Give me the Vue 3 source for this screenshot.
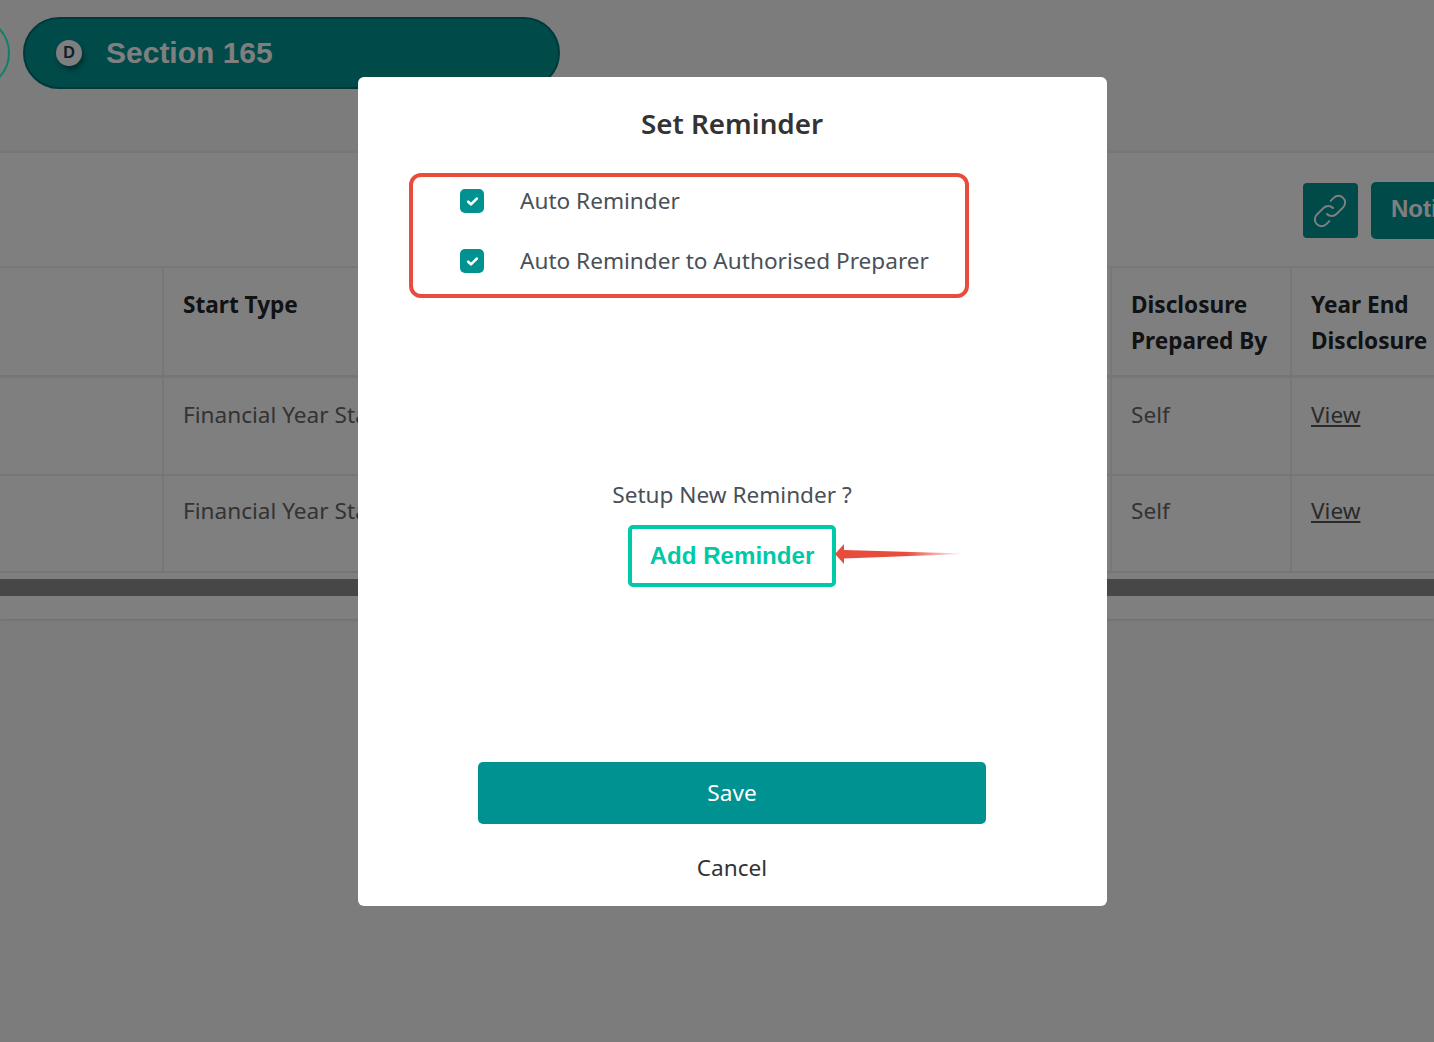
<template>
  <div class="page">
    <!-- page behind the dialog -->
    <div class="top">
      <div class="step-ring"></div>
      <div class="section-pill">
        <span class="badge">D</span>
        <span class="section-name">Section 165</span>
      </div>
    </div>

    <div class="card">
      <div class="toolbar">
        <button class="link-btn" aria-label="Copy link">
          <svg width="40" height="40" viewBox="0 0 24 24" fill="none" stroke="#fff" stroke-width="1.2" stroke-linecap="round" stroke-linejoin="round">
            <path d="M10.2 13.8a4 4 0 0 0 5.7 0l4-4a4 4 0 0 0-5.7-5.7l-1.8 1.8" />
            <path d="M13.8 10.2a4 4 0 0 0-5.7 0l-4 4a4 4 0 0 0 5.7 5.7l1.8-1.8" />
          </svg>
        </button>
        <button class="notify-btn">Notify</button>
      </div>

      <div class="table">
        <div class="cell head"></div>
        <div class="cell head">Start Type</div>
        <div class="cell head">Disclosure<br />Prepared By</div>
        <div class="cell head last">Year End<br />Disclosure</div>
        <template v-for="row in rows" :key="row.id">
          <div class="cell"></div>
          <div class="cell" :class="row.cls">{{ row.start }}</div>
          <div class="cell" :class="row.cls">{{ row.by }}</div>
          <div class="cell last" :class="row.cls"><a class="view">View</a></div>
        </template>
      </div>

      <div class="scroll-track"><div class="scroll-thumb"></div></div>
    </div>

    <div class="overlay"></div>

    <div class="modal">
      <h2 class="title">Set Reminder</h2>

      <div class="auto-box">
        <label class="check-row" v-for="opt in options" :key="opt">
          <span class="check">
            <svg width="13" height="11" viewBox="0 0 12 10" fill="none" stroke="#fff" stroke-width="2.4" stroke-linecap="round" stroke-linejoin="round">
              <path d="M2 5.2 4.6 7.6 10 2.4" />
            </svg>
          </span>
          <span class="check-text">{{ opt }}</span>
        </label>
      </div>

      <p class="setup">Setup New Reminder ?</p>
      <div class="add-wrap">
        <button class="add-btn">Add Reminder</button>
        <svg class="arrow" width="130" height="22" viewBox="0 0 130 22">
          <defs>
            <linearGradient id="tail" x1="0" x2="1" y1="0" y2="0">
              <stop offset="0.55" stop-color="#e74c3c" />
              <stop offset="1" stop-color="#e74c3c" stop-opacity="0" />
            </linearGradient>
          </defs>
          <path d="M0 11 9 1V7L129 10.4V11L9 15.5V21Z" fill="url(#tail)" />
        </svg>
      </div>

      <button class="save-btn">Save</button>
      <a class="cancel">Cancel</a>
    </div>
  </div>
</template>

<script setup>
const options = ['Auto Reminder', 'Auto Reminder to Authorised Preparer']

const rows = [
  { id: 1, start: 'Financial Year Start', by: 'Self', cls: '' },
  { id: 2, start: 'Financial Year Start', by: 'Self', cls: 'tight' }
]
</script>

<style>
html, body {
  margin: 0;
  overflow: hidden;
}
</style>

<style scoped>
.page {
  position: relative;
  width: 1434px;
  height: 1042px;
  overflow: hidden;
  background: #f8f8f8;
  font-family: "Noto Sans", "Open Sans", sans-serif;
  color: #333;
}

.overlay {
  position: absolute;
  inset: 0;
  background: rgba(0, 0, 0, 0.5);
}

.top {
  height: 151px;
  display: flex;
  align-items: flex-start;
  gap: 13px;
  padding-top: 17px;
  box-sizing: border-box;
}

.step-ring {
  flex: none;
  width: 72px;
  height: 72px;
  margin-left: -62px;
  border: 2px solid #1fffd0;
  border-radius: 50%;
  box-sizing: border-box;
}

.section-pill {
  flex: none;
  width: 537px;
  height: 72px;
  display: flex;
  align-items: center;
  gap: 24px;
  padding-left: 31px;
  box-sizing: border-box;
  background: #009494;
  border: 2px solid #007373;
  border-radius: 36px;
}

.badge {
  width: 26px;
  height: 26px;
  border-radius: 50%;
  background: #fff;
  color: #1f3d5c;
  font-family: "Liberation Sans", sans-serif;
  font-weight: 700;
  font-size: 16px;
  line-height: 26px;
  text-align: center;
  box-shadow: 2px 4px 5px rgba(0, 0, 0, 0.35);
}

.section-name {
  font-family: "Liberation Sans", sans-serif;
  font-weight: 700;
  font-size: 30px;
  color: #fff;
}

.card {
  height: 468px;
  box-sizing: border-box;
  display: flex;
  flex-direction: column;
  background: #fff;
  border-top: 2px solid #efefef;
  box-shadow: 0 1px 3px rgba(0, 0, 0, 0.12);
}

.toolbar {
  height: 113px;
  flex: none;
  display: flex;
  justify-content: flex-end;
  gap: 13px;
  padding: 29px 0 0;
  box-sizing: border-box;
}

.link-btn {
  width: 55px;
  height: 55px;
  margin-top: 1px;
  padding: 0 2px 0 0;
  display: flex;
  align-items: center;
  justify-content: center;
  background: #009494;
  border: 0;
  border-radius: 4px;
}

.notify-btn {
  flex: none;
  width: 63px;
  height: 57px;
  padding: 0 0 3px 20px;
  overflow: hidden;
  white-space: nowrap;
  text-align: left;
  background: #009494;
  border: 0;
  border-radius: 5px 0 0 5px;
  color: #fff;
  font-family: "Liberation Sans", sans-serif;
  font-weight: 700;
  font-size: 24px;
}

.table {
  display: grid;
  grid-template-columns: 164px 948px 180px 142px;
  grid-template-rows: 110px 98px 97px;
  border-top: 2px solid #efefef;
}

.cell {
  padding: 19px 10px 0 19px;
  box-sizing: border-box;
  border-right: 2px solid #efefef;
  border-bottom: 2px solid #ececec;
  font-size: 22.6px;
  line-height: 36px;
  color: #666;
  white-space: nowrap;
  overflow: hidden;
}

.cell.head {
  font-weight: 700;
  color: #212529;
  border-bottom-width: 3px;
}

.cell.tight {
  padding-top: 17px;
}

.cell.last {
  border-right: 0;
}

.view {
  color: #555;
  text-decoration: underline;
}

.scroll-track {
  margin-top: 6px;
  height: 17px;
}

.scroll-thumb {
  height: 100%;
  background: #8e8e8e;
}

.modal {
  position: absolute;
  left: 358px;
  top: 77px;
  width: 749px;
  height: 829px;
  box-sizing: border-box;
  padding: 26px 1px 0 0;
  display: flex;
  flex-direction: column;
  align-items: center;
  background: #fff;
  border-radius: 6px;
  color: #495057;
}

.title {
  margin: 0;
  font-size: 27.8px;
  line-height: 40px;
  font-weight: 600;
  color: #333;
}

.auto-box {
  align-self: flex-start;
  width: 560px;
  height: 125px;
  margin: 30px 0 0 51px;
  padding: 0 0 0 47px;
  box-sizing: border-box;
  border: 4px solid #e74c3c;
  border-radius: 12px;
  display: flex;
  flex-direction: column;
  gap: 12px;
}

.check-row {
  height: 48px;
  display: flex;
  align-items: center;
  gap: 36px;
  font-size: 22.6px;
  white-space: nowrap;
}

.check-text {
  margin-top: -2px;
}

.check {
  width: 24px;
  height: 24px;
  flex: none;
  display: flex;
  align-items: center;
  justify-content: center;
  background: #009191;
  border-radius: 5px;
}

.setup {
  margin: 180px 0 0;
  font-size: 22.6px;
  line-height: 34px;
}

.add-wrap {
  position: relative;
  margin-top: 13px;
}

.add-btn {
  display: block;
  width: 208px;
  height: 62px;
  padding: 0;
  background: #fff;
  border: 4px solid #00c9a7;
  border-radius: 5px;
  color: #00c9a7;
  font-family: "Liberation Sans", sans-serif;
  font-weight: 700;
  font-size: 24.1px;
}

.arrow {
  position: absolute;
  left: 207px;
  top: 18px;
}

.save-btn {
  width: 508px;
  height: 62px;
  margin-top: 175px;
  padding: 0 0 2px;
  background: #009191;
  border: 0;
  border-radius: 5px;
  color: #fff;
  font-family: "Noto Sans", sans-serif;
  font-size: 22.6px;
}

.cancel {
  margin-top: 27px;
  font-size: 22.6px;
  line-height: 34px;
  color: #333;
}
</style>
